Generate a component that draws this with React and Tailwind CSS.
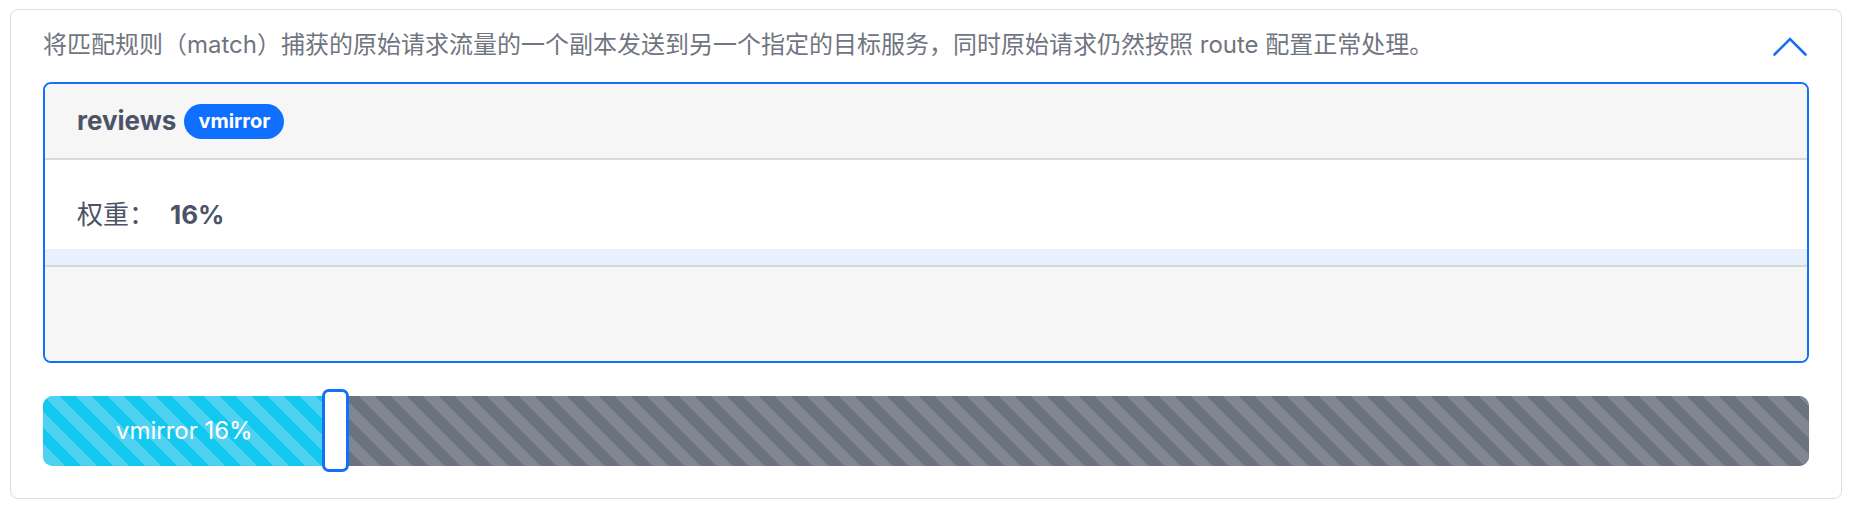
import React from "react";

const FONT = 'Inter, "Noto Sans CJK SC", "Noto Sans", sans-serif';

export default function App() {
  return (
    <div className="bg-white w-[1852px] h-[510px] px-[10px] pt-[9px]" style={{ fontFamily: FONT }}>
      <div className="border border-[#dddddd] rounded-[8px] h-[490px] px-[32px] pt-[18px]">
        {/* description row */}
        <div className="flex items-center justify-between h-[34px]">
          <p className="text-[24px] leading-[34px] text-[#70757f]">
            将匹配规则（match）捕获的原始请求流量的一个副本发送到另一个指定的目标服务，同时原始请求仍然按照 route 配置正常处理。
          </p>
          <svg width="34" height="19" viewBox="0 0 34 19" className="mr-[2px] mt-[2px]" fill="none">
            <polyline points="1.5,17.5 17,2 32.5,17.5" stroke="#1a6ef5" strokeWidth="2.6" strokeLinecap="round" strokeLinejoin="miter" />
          </svg>
        </div>

        {/* destination box */}
        <div className="mt-[20px] border-2 border-[#1470f6] rounded-[8px] overflow-hidden">
          <div className="h-[74px] bg-[#f6f6f6] flex items-center pl-[32px] gap-[8px] border-b-2 border-[#d9d9d9] box-content">
            <span className="text-[26px] font-bold text-[#4c5367] leading-none">reviews</span>
            <span className="h-[35px] px-[14px] rounded-full bg-[#0f6fff] text-white text-[20px] font-bold flex items-center leading-none">
              vmirror
            </span>
          </div>
          <div className="bg-white h-[89px] pl-[32px] pt-[36px]">
            <div className="flex items-center h-[36px] text-[26px] text-[#4c5367]">
              <span>权重：</span>
              <span className="font-bold ml-[15px]">16%</span>
            </div>
          </div>
          <div className="h-[16px] bg-[#e8f0fd] border-b-2 border-[#d8d8d8] box-content"></div>
          <div className="h-[94px] bg-[#f6f6f6]"></div>
        </div>

        {/* weight bar */}
        <div className="relative mt-[33px] h-[70px]">
          <div className="flex h-full rounded-[10px] overflow-hidden">
            <div
              className="w-[16%] flex-none flex items-center justify-center text-white text-[24px] bg-[#13c8ee] bg-[length:32px_32px] bg-[linear-gradient(45deg,#4fd1f1_25%,#13c8ee_25%,#13c8ee_50%,#4fd1f1_50%,#4fd1f1_75%,#13c8ee_75%)]"
            >
              vmirror 16%
            </div>
            <div className="flex-1 bg-[#6c7380] bg-[length:32px_32px] bg-[linear-gradient(45deg,#818792_25%,#6c7380_25%,#6c7380_50%,#818792_50%,#818792_75%,#6c7380_75%)]"></div>
          </div>
          <div className="absolute left-[calc(16%-4px)] top-[-7px] w-[27px] h-[83px] bg-white border-[3px] border-[#1470f6] rounded-[7px]"></div>
        </div>
      </div>
    </div>
  );
}
